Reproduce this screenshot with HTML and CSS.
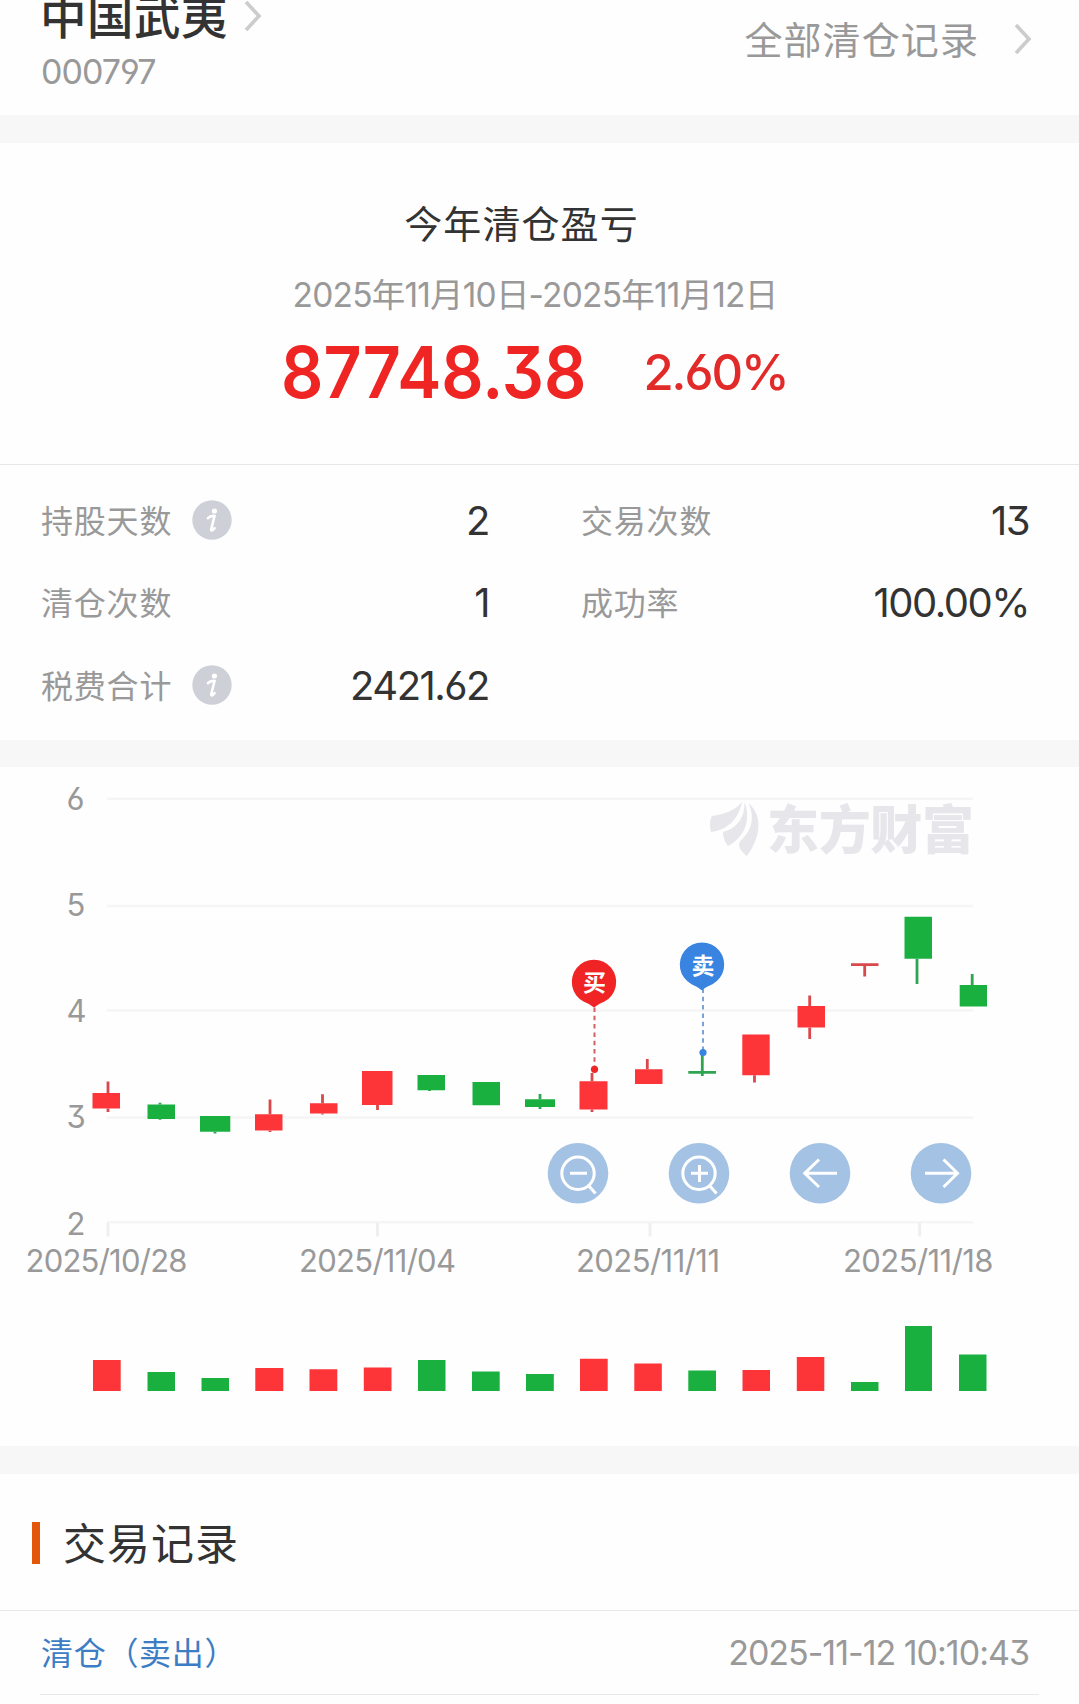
FILE: index.html
```html
<!DOCTYPE html>
<html lang="zh-CN">
<head>
<meta charset="utf-8">
<title>清仓记录</title>
<link rel="stylesheet" href="styles.css">
</head>
<body>
<main class="page">
  <header class="stock">
    <div class="stock-id">
      <div class="stock-name"><span>中国武夷</span>
        <svg class="chevron" width="18" height="34" viewBox="0 0 18 34"><path d="M2 2 15 16 2 30"/></svg>
      </div>
      <div class="stock-code">000797</div>
    </div>
    <a class="all-records"><span>全部清仓记录</span>
      <svg class="chevron" width="18" height="34" viewBox="0 0 18 34"><path d="M2 3 15 17 2 31"/></svg>
    </a>
  </header>

  <section class="summary">
    <h2 class="summary-title">今年清仓盈亏</h2>
    <div class="summary-range">2025年11月10日-2025年11月12日</div>
    <div class="summary-figures"><span class="profit">87748.38</span><span class="rate">2.60%</span></div>
  </section>

  <section class="stats">
    <div class="stat"><span class="label">持股天数</span><i class="info"><svg width="40" height="40" viewBox="0 0 40 40"><circle cx="20" cy="20" r="19.7"/><circle class="ink" cx="22.4" cy="11" r="2.6"/><path d="M16 18.2C18.300 15.600 20.700 15.700 22.500 16L19.200 29.500C18.900 31 20.800 30.400 22.600 28.200"/></svg></i><span class="value">2</span></div>
    <div class="stat"><span class="label">交易次数</span><span class="value">13</span></div>
    <div class="stat"><span class="label">清仓次数</span><span class="value">1</span></div>
    <div class="stat"><span class="label">成功率</span><span class="value">100.00%</span></div>
    <div class="stat"><span class="label">税费合计</span><i class="info"><svg width="40" height="40" viewBox="0 0 40 40"><circle cx="20" cy="20" r="19.7"/><circle class="ink" cx="22.4" cy="11" r="2.6"/><path d="M16 18.2C18.300 15.600 20.700 15.700 22.500 16L19.200 29.500C18.900 31 20.800 30.400 22.600 28.200"/></svg></i><span class="value">2421.62</span></div>
  </section>

  <section class="chart">
    <svg width="1079" height="679" viewBox="0 767 1079 679">
      <g class="grid">
        <path d="M107 798.700H973M107 906H973M107 1010.500H973M107 1117.500H973M107 1222.300H973"/>
        <path class="ticks" d="M108 1223V1236.500M377.500 1223V1236.500M650 1223V1236.500M919.700 1223V1236.500"/>
      </g>
      <g class="watermark">
        <path d="M742 802C735 811 724 814 712 816C709 821 710 827 711 832C726 830 738 821 742 802Z"/>
        <path d="M744.500 802C745 818 737 828 723 832C723 838 725 842 728 846C743 838 752 822 744.500 802Z"/>
        <path d="M748.500 803C756 821 750 832 739.500 842C738 848 742 852 747 856C760 838 764 817 748.500 803Z"/>
        <text x="767" y="849" textLength="207">东方财富</text>
      </g>
      <g class="axis">
        <text x="66.500" y="809.500">6</text><text x="66.500" y="916">5</text><text x="66.500" y="1021.500">4</text><text x="66.500" y="1127.500">3</text><text x="66.500" y="1234.500">2</text>
        <text x="25.500" y="1272" textLength="162">2025/10/28</text>
        <text x="299" y="1272" textLength="157">2025/11/04</text>
        <text x="576" y="1272" textLength="144">2025/11/11</text>
        <text x="843" y="1272" textLength="150.500">2025/11/18</text>
      </g>
      <g class="up">
        <path d="M92.500 1093H120V1108.500H92.500ZM255 1114.300H282.500V1130.500H255ZM310 1103.300H337.500V1113.500H310ZM362 1071H392.500V1105H362ZM579.500 1081.300H607.500V1109.500H579.500ZM635 1069.300H662.500V1084H635ZM742.300 1034.500H769.700V1075.300H742.300ZM797.500 1006H825V1027.500H797.500Z"/>
        <path class="wick" d="M108 1081.500V1093M108 1108.500V1112M270 1099.500V1114.300M270 1130.500V1132M322.500 1094.300V1103.300M322.500 1113.500V1114.500M377.500 1105V1110M592 1073V1081.300M592 1109.500V1112M647.300 1059V1069.300M754.500 1075.300V1082.500M809.700 995.500V1006M809.700 1027.500V1039M851 964.700H878.500M864.700 964.700V976.500"/>
        <path d="M93 1360H120.700V1391H93ZM255.300 1368H283.300V1391H255.300ZM309.500 1369.300H337.300V1391H309.500ZM363.800 1367.500H391.500V1391H363.800ZM580 1358.700H607.700V1391H580ZM634.300 1363.500H661.800V1391H634.300ZM742.500 1370H770V1391H742.500ZM796.800 1357H824.300V1391H796.800Z"/>
      </g>
      <g class="down">
        <path d="M147.500 1104.500H175V1119H147.500ZM200 1116H230.300V1131.700H200ZM417.500 1075H445V1090.300H417.500ZM472.500 1082H500V1105.300H472.500ZM525 1099.300H555V1107H525ZM904.500 916.700H932V958.800H904.500ZM959.700 985H987V1006.500H959.700Z"/>
        <path class="wick" d="M160 1102.700V1104.500M160 1119V1119.800M215 1131.700V1133.500M429.500 1090V1091M540 1094V1099.300M540 1107V1109M688.300 1072.300H716M702.300 1054V1076M917 958.800V984M972.200 974V985"/>
        <path d="M147.500 1372H175V1391H147.500ZM201.500 1378H229V1391H201.500ZM418 1360H445.500V1391H418ZM472 1371.500H499.700V1391H472ZM526 1374H553.800V1391H526ZM688.300 1370.500H716V1391H688.300ZM851 1382H878.500V1391H851ZM905 1326H932V1391H905ZM959 1354.500H986.500V1391H959Z"/>
      </g>
      <g class="buy">
        <path class="lead" d="M594.500 1007.500V1066"/>
        <circle cx="594.500" cy="1069.300" r="3.600"/>
        <path d="M594 1007.500Q590 1004 583.500 1001.500A22.200 22.200 0 1 1 604.500 1001.500Q598 1004 594 1007.500Z"/>
        <text x="594.500" y="990.500">买</text>
      </g>
      <g class="sell">
        <path class="lead" d="M703 988.500V1050"/>
        <circle cx="703" cy="1052.500" r="3.600"/>
        <path d="M701.700 990.200Q697.700 986.700 691.500 984.200A22.200 22.200 0 1 1 712.500 984.200Q706 986.700 701.700 990.200Z"/>
        <text x="703" y="973.500">卖</text>
      </g>
      <g class="controls">
        <g><circle cx="578" cy="1173.300" r="30.300"/><path d="M594.200 1173.300A16.200 16.200 0 1 1 561.800 1173.300A16.200 16.200 0 1 1 594.200 1173.300M588.500 1185.500 595.500 1193.500M570 1173.300H587"/></g>
        <g><circle cx="699" cy="1173.300" r="30.300"/><path d="M715.200 1173.300A16.200 16.200 0 1 1 682.800 1173.300A16.200 16.200 0 1 1 715.200 1173.300M709.500 1185.500 716.500 1193.500M691 1173.300H708M699.500 1165V1182"/></g>
        <g><circle cx="820" cy="1173.300" r="30.300"/><path d="M837 1173.300H804.700M819 1159.500 804.700 1173.300 819 1187"/></g>
        <g><circle cx="941" cy="1173.300" r="30.300"/><path d="M925 1173.300H957.500M943.500 1159.500 957.500 1173.300 943.500 1187"/></g>
      </g>
    </svg>
  </section>

  <section class="trades">
    <h2 class="trades-title">交易记录</h2>
    <div class="trade"><span class="trade-type">清仓（卖出）</span><span class="trade-time">2025-11-12 10:10:43</span></div>
  </section>
</main>
</body>
</html>
```
FILE: styles.css
```css
* { box-sizing: border-box; }
body {
  margin: 0;
  background: #fefefe;
  color: #333;
  font-family: Inter, "Noto Sans CJK SC", sans-serif;
  font-feature-settings: "cv03", "cv04", "cv09";
}
h2 { margin: 0; font-weight: 400; }
.page { width: 1079px; height: 1704px; overflow: hidden; }

.stock {
  display: flex;
  justify-content: space-between;
  height: 143px;
  padding: 0 47px 0 41px;
  border-bottom: 28px solid #f7f7f7;
}
.stock-name {
  display: flex;
  align-items: center;
  gap: 16px;
  margin: -8px 0 0 -1px;
  font-size: 46.500px;
  font-weight: 500;
  letter-spacing: 0.500px;
  line-height: 50px;
}
.stock-code {
  margin-top: 10px;
  color: #999;
  font-size: 34px;
  letter-spacing: -1px;
  line-height: 40px;
}
.all-records {
  display: flex;
  align-items: center;
  gap: 35px;
  height: 78px;
  color: #999;
  font-size: 38px;
  letter-spacing: 1.100px;
}
.all-records span { padding-bottom: 4px; }
.chevron { fill: none; stroke: #ccc; stroke-width: 3.600; }

.summary {
  display: flex;
  flex-direction: column;
  align-items: center;
  height: 322px;
  padding-top: 56px;
  border-bottom: 1px solid #e8e8e8;
}
.summary-title {
  margin-right: 36px;
  font-size: 38px;
  letter-spacing: 1.100px;
  line-height: 50px;
}
.summary-range {
  margin: 26px 9px 0 0;
  color: #999;
  font-size: 33.500px;
  letter-spacing: -0.800px;
  line-height: 40px;
}
.summary-figures {
  display: flex;
  align-items: center;
  gap: 59px;
  margin: 16px 10px 0 0;
  line-height: 80px;
}
.profit {
  margin-right: -28.800px;
  color: #ef2524;
  font-size: 72px;
  font-weight: 600;
  transform: scaleX(0.920);
  transform-origin: left;
}
.rate { padding-top: 2px; color: #e22a29; font-size: 49px; font-weight: 500; letter-spacing: -2px; }

.stats {
  display: grid;
  grid-template-columns: 448px 448px;
  grid-auto-rows: 82.500px;
  column-gap: 92px;
  height: 302px;
  padding: 14px 0 0 41px;
  border-bottom: 27px solid #f7f7f7;
}
.stat { display: flex; align-items: center; }
.label { padding-bottom: 3px; color: #999; font-size: 32px; letter-spacing: 0.800px; }
.value { margin-left: auto; font-size: 40px; letter-spacing: -1.500px; }
.info { display: flex; margin-left: 20px; }
.info svg { fill: #cdd0d6; }
.info .ink { fill: #fff; }
.info path { fill: none; stroke: #fff; stroke-width: 2.600; stroke-linecap: round; }

.chart { height: 707px; border-bottom: 28px solid #f7f7f7; }
.chart svg { display: block; }
.grid { fill: none; stroke: #f5f5f5; stroke-width: 2.500; }
.grid .ticks { stroke: #efefef; stroke-width: 3; }
.watermark { fill: #e6e6eb; }
.watermark text { font-size: 52px; font-weight: 900; }
.axis { fill: #999; font-size: 31px; }
.wick { fill: none; stroke-width: 2.800; }
.up { fill: #fd3438; }
.up .wick { stroke: #d9484c; }
.down { fill: #1ab040; }
.down .wick { stroke: #2fa550; }
.lead { fill: none; stroke-width: 2; stroke-dasharray: 4.500 3.800; }
.buy { fill: #f02424; }
.buy .lead { stroke: #d3615e; }
.sell { fill: #3983e1; }
.sell .lead { stroke: #79a3d6; }
.buy text, .sell text { fill: #fff; font-size: 23px; font-weight: 700; text-anchor: middle; }
.controls circle { fill: #a4c2e4; }
.controls path { fill: none; stroke: #fff; stroke-width: 3; }

.trades-title {
  display: flex;
  align-items: center;
  gap: 23px;
  height: 137px;
  padding: 0 0 2px 32px;
  border-bottom: 1px solid #e8e8e8;
  font-size: 43px;
  letter-spacing: 1px;
}
.trades-title::before {
  width: 8px;
  height: 42px;
  margin-top: 3px;
  background: #e3570a;
  content: "";
}
.trade {
  display: flex;
  align-items: center;
  justify-content: space-between;
  height: 84px;
  margin: 0 40px;
  padding: 0 10px 0 1px;
  border-bottom: 1px solid #e8e8e8;
}
.trade-type { padding-bottom: 4px; color: #3c7dc4; font-size: 32px; letter-spacing: 0.700px; }
.trade-time { color: #999; font-size: 34px; letter-spacing: -1px; }
```
